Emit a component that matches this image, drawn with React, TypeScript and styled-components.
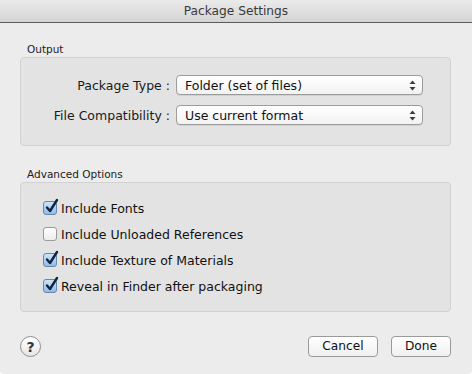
import React from "react";
import styled, { createGlobalStyle } from "styled-components";

const Global = createGlobalStyle`
  html, body { margin: 0; padding: 0; background: #ffffff; }
  body { font-family: "Lucida Grande", "DejaVu Sans", "Liberation Sans", sans-serif; }
  #root { width: 472px; height: 374px; }
`;

const Window = styled.div`
  width: 472px;
  height: 374px;
  box-sizing: border-box;
  background: #ececec;
  display: flex;
  flex-direction: column;
  border-radius: 0 0 4px 4px;
  overflow: hidden;
  color: #1a1a1a;
`;

const TitleBar = styled.div`
  height: 22px;
  flex: none;
  background: linear-gradient(#ebebeb, #d4d4d4);
  border-bottom: 1px solid #5a5a5a;
  display: flex;
  align-items: center;
  justify-content: center;
  font-size: 12.2px;
  color: #3a3a3a;
`;

const Content = styled.div`
  padding: 0 21px 0 20px;
  display: flex;
  flex-direction: column;
`;

const SectionLabel = styled.div<{ $top: number }>`
  margin-top: ${(p) => p.$top}px;
  padding-left: 7px;
  font-size: 10.5px;
  line-height: 14px;
  color: #222;
`;

const Group = styled.div<{ $h: number; $pt: number }>`
  margin-top: 1px;
  height: ${(p) => p.$h}px;
  box-sizing: border-box;
  background: #e3e3e3;
  border: 1px solid #d2d2d2;
  border-radius: 4px;
  padding-top: ${(p) => p.$pt}px;
  display: flex;
  flex-direction: column;
`;

const FieldRow = styled.div`
  display: grid;
  grid-template-columns: 149px 247px;
  column-gap: 6px;
  align-items: center;
  margin-bottom: 10px;
`;

const FieldLabel = styled.div`
  text-align: right;
  font-size: 12.5px;
  color: #1a1a1a;
  white-space: pre;
`;

const Popup = styled.div`
  height: 20px;
  box-sizing: border-box;
  border: 1px solid #9c9c9c;
  border-radius: 4px;
  background: linear-gradient(#ffffff, #f2f2f2);
  box-shadow: 0 1px 0 rgba(0, 0, 0, 0.08);
  display: flex;
  align-items: center;
  justify-content: space-between;
  padding: 0 6px 0 8px;
  font-size: 12.5px;
  color: #111;
`;

const CheckRow = styled.label`
  display: flex;
  align-items: center;
  height: 26px;
  padding-left: 22px;
  font-size: 12.5px;
  color: #111;
`;

const Box = styled.span<{ $on: boolean }>`
  width: 14px;
  height: 14px;
  box-sizing: border-box;
  border: 1px solid ${(p) => (p.$on ? "#6b87a8" : "#9a9a9a")};
  border-radius: 3px;
  background: ${(p) =>
    p.$on ? "linear-gradient(#cfe4f8, #8ebde8)" : "linear-gradient(#ffffff, #ececec)"};
  margin-right: 4px;
  position: relative;
  flex: none;
`;

const CheckSvg = styled.svg`
  position: absolute;
  left: 1px;
  top: -4px;
`;

const Footer = styled.div`
  margin-top: 23px;
  display: flex;
  align-items: center;
`;

const Help = styled.div`
  width: 21px;
  height: 21px;
  box-sizing: border-box;
  border-radius: 50%;
  border: 1px solid #8e8e8e;
  background: linear-gradient(#ffffff, #e6e6e6);
  display: flex;
  align-items: center;
  justify-content: center;
  font-size: 14px;
  font-weight: bold;
  color: #333;
  margin-top: 1px;
`;

const Spacer = styled.div`
  flex: 1;
`;

const Button = styled.div<{ $w: number }>`
  width: ${(p) => p.$w}px;
  height: 21px;
  box-sizing: border-box;
  border: 1px solid #9a9a9a;
  border-radius: 4px;
  background: linear-gradient(#ffffff, #f0f0f0);
  display: flex;
  align-items: center;
  justify-content: center;
  font-size: 12.2px;
  color: #111;
  margin-left: 13px;
`;

const Arrows = () => (
  <svg width="7" height="11" viewBox="0 0 7 11">
    <path d="M3.5 0.5 L6.5 4 L0.5 4 Z" fill="#3c3c3c" />
    <path d="M3.5 10.5 L6.5 7 L0.5 7 Z" fill="#3c3c3c" />
  </svg>
);

const Check = ({ on, label }: { on: boolean; label: string }) => (
  <CheckRow>
    <Box $on={on}>
      {on && (
        <CheckSvg width="14" height="16" viewBox="0 0 14 16">
          <path
            d="M2 9.5 L5 13 L12 2"
            stroke="#0f2440"
            strokeWidth="2.4"
            fill="none"
            strokeLinecap="round"
            strokeLinejoin="round"
          />
        </CheckSvg>
      )}
    </Box>
    {label}
  </CheckRow>
);

export default function App() {
  return (
    <>
      <Global />
      <Window>
        <TitleBar>Package Settings</TitleBar>
        <Content>
          <SectionLabel $top={19}>Output</SectionLabel>
          <Group $h={89} $pt={17}>
            <FieldRow>
              <FieldLabel>Package Type :</FieldLabel>
              <Popup>
                <span>Folder (set of files)</span>
                <Arrows />
              </Popup>
            </FieldRow>
            <FieldRow>
              <FieldLabel>File Compatibility :</FieldLabel>
              <Popup>
                <span>Use current format</span>
                <Arrows />
              </Popup>
            </FieldRow>
          </Group>
          <SectionLabel $top={21}>Advanced Options</SectionLabel>
          <Group $h={130} $pt={12}>
            <Check on label="Include Fonts" />
            <Check on={false} label="Include Unloaded References" />
            <Check on label="Include Texture of Materials" />
            <Check on label="Reveal in Finder after packaging" />
          </Group>
          <Footer>
            <Help>?</Help>
            <Spacer />
            <Button $w={70}>Cancel</Button>
            <Button $w={60}>Done</Button>
          </Footer>
        </Content>
      </Window>
    </>
  );
}
